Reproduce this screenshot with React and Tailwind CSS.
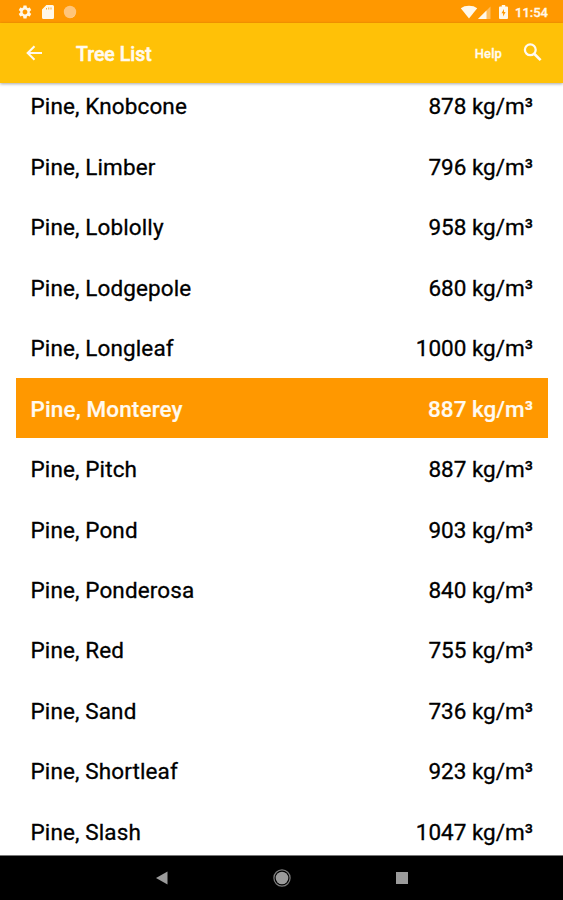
import React, { useState } from 'react';
import { MdSettings } from 'react-icons/md';

const trees = [
  { name: 'Pine, Knobcone', density: 878 },
  { name: 'Pine, Limber', density: 796 },
  { name: 'Pine, Loblolly', density: 958 },
  { name: 'Pine, Lodgepole', density: 680 },
  { name: 'Pine, Longleaf', density: 1000 },
  { name: 'Pine, Monterey', density: 887 },
  { name: 'Pine, Pitch', density: 887 },
  { name: 'Pine, Pond', density: 903 },
  { name: 'Pine, Ponderosa', density: 840 },
  { name: 'Pine, Red', density: 755 },
  { name: 'Pine, Sand', density: 736 },
  { name: 'Pine, Shortleaf', density: 923 },
  { name: 'Pine, Slash', density: 1047 },
];

const StatusBar = () => (
  <div className="h-[23px] shrink-0 bg-[#ff9800] flex items-center justify-between pl-[17px] pr-[15px] text-[#fff8ea]">
    <div className="flex items-center pt-px">
      <MdSettings className="size-[16px]" />
      <svg viewBox="0 0 12 14" className="w-[12px] h-[14px] ml-[9px]" fill="currentColor">
        <path fillRule="evenodd" d="M4.4 0H10.5Q12 0 12 1.5V12.5Q12 14 10.5 14H1.5Q0 14 0 12.5V4.4ZM4.2 3V4.6H5V3ZM6.4 2.5V4.6H7.2V2.5ZM8.6 2.5V4.6H9.4V2.5Z" />
      </svg>
      <svg viewBox="0 0 14 14" className="size-[14px] ml-[9px]">
        <circle cx="7" cy="7" r="6.2" fill="#ffc57a" />
        <path d="M10.8 2.1A6.2 6.2 0 1 1 2.6 11.4A6 6 0 0 0 10.8 2.1Z" fill="#ffe8c6" />
      </svg>
    </div>
    <div className="flex items-center">
      <svg viewBox="0 0 18 14" className="w-[18px] h-[14px]" fill="currentColor">
        <path d="M9 13.5L0.8 3.2Q4 0.8 9 0.8T17.2 3.2Z" />
      </svg>
      <svg viewBox="0 0 13 13" className="size-[13px] mt-px" fill="currentColor">
        <path d="M12.5 0.5V13H0Z" fillOpacity="0.4" />
        <path d="M8.5 4.5V13H0Z" />
      </svg>
      <svg viewBox="0 0 9 14" className="w-[9px] h-[14px] ml-[8px]">
        <path d="M2.8 0H6.2V1.4H8Q9 1.4 9 2.4V13Q9 14 8 14H1Q0 14 0 13V2.4Q0 1.4 1 1.4H2.8Z" fill="currentColor" />
        <path d="M5 4L2.5 8.3H4.1V11.5L6.6 7.1H5Z" fill="#ff9800" />
      </svg>
      <span className="ml-[7px] mt-px w-[33px] text-[13px] leading-none font-medium whitespace-nowrap [-webkit-text-stroke:0.3px]">11:54</span>
    </div>
  </div>
);

const AppBar = () => (
  <header className="relative z-10 h-[60px] shrink-0 bg-[#ffc107] flex items-center pl-[23px] pr-[19px] text-[#fffaf0] shadow-[0_1px_3px_rgba(0,0,0,0.35)]">
    <button type="button" aria-label="Back" className="pb-px">
      <svg viewBox="0 0 22 22" className="size-[22px]" fill="none" stroke="currentColor" strokeWidth="2.1">
        <path d="M19 11H5M11.5 4.2L4.7 11L11.5 17.8" />
      </svg>
    </button>
    <h1 className="ml-[31px] pt-[3px] text-[19.5px] leading-none font-medium [-webkit-text-stroke:0.5px]">Tree List</h1>
    <button type="button" className="ml-auto pt-px text-[13px] leading-none font-medium tracking-[0.1px] [-webkit-text-stroke:0.3px]">Help</button>
    <button type="button" aria-label="Search" className="ml-[19px] pb-px">
      <svg viewBox="0 0 23 23" className="size-[23px]" fill="none" stroke="currentColor" strokeWidth="2.3">
        <circle cx="9.3" cy="8.8" r="5.4" />
        <path d="M13.2 12.7L19.6 19.1" strokeWidth="2.7" />
      </svg>
    </button>
  </header>
);

const TreeRow = ({ tree, active, onSelect }) => (
  <li
    onClick={onSelect}
    className={`h-[60.45px] px-[15px] pt-[2px] flex items-center justify-between text-[22.5px] leading-none ${
      active
        ? 'bg-[#ff9800] text-[#fffaf0] font-medium [-webkit-text-stroke:0.2px]'
        : 'text-black [-webkit-text-stroke:0.3px]'
    }`}
  >
    <span className="-ml-[0.5px] tracking-[0.12px]">{tree.name}</span>
    <span>{tree.density} kg/m³</span>
  </li>
);

const NavBar = () => (
  <nav className="h-[45px] shrink-0 bg-black border-t border-[#777] flex items-center text-[#9b9b9b]">
    <svg viewBox="0 0 12 14" className="w-[12px] h-[14px] ml-[156px]" fill="currentColor">
      <path d="M11.5 0.5V13.5L0 7Z" />
    </svg>
    <svg viewBox="0 0 18 18" className="size-[18px] ml-[105px]">
      <circle cx="9" cy="9" r="8.1" fill="none" stroke="#7c7c7c" strokeWidth="1.2" />
      <circle cx="9" cy="9" r="6.3" fill="currentColor" />
    </svg>
    <span className="size-[12px] ml-[105px] bg-[#9b9b9b]" />
  </nav>
);

const App = () => {
  const [selected, setSelected] = useState('Pine, Monterey');

  return (
    <div className="h-[900px] w-[563px] flex flex-col overflow-hidden bg-white font-['Roboto',sans-serif]">
      <StatusBar />
      <AppBar />
      <main className="flex-1 min-h-0 overflow-hidden">
        <ul className="-mt-[7.5px] pl-[16px] pr-[15px]">
          {trees.map((tree) => (
            <TreeRow
              key={tree.name}
              tree={tree}
              active={tree.name === selected}
              onSelect={() => setSelected(tree.name)}
            />
          ))}
        </ul>
      </main>
      <NavBar />
    </div>
  );
};

export default App;
